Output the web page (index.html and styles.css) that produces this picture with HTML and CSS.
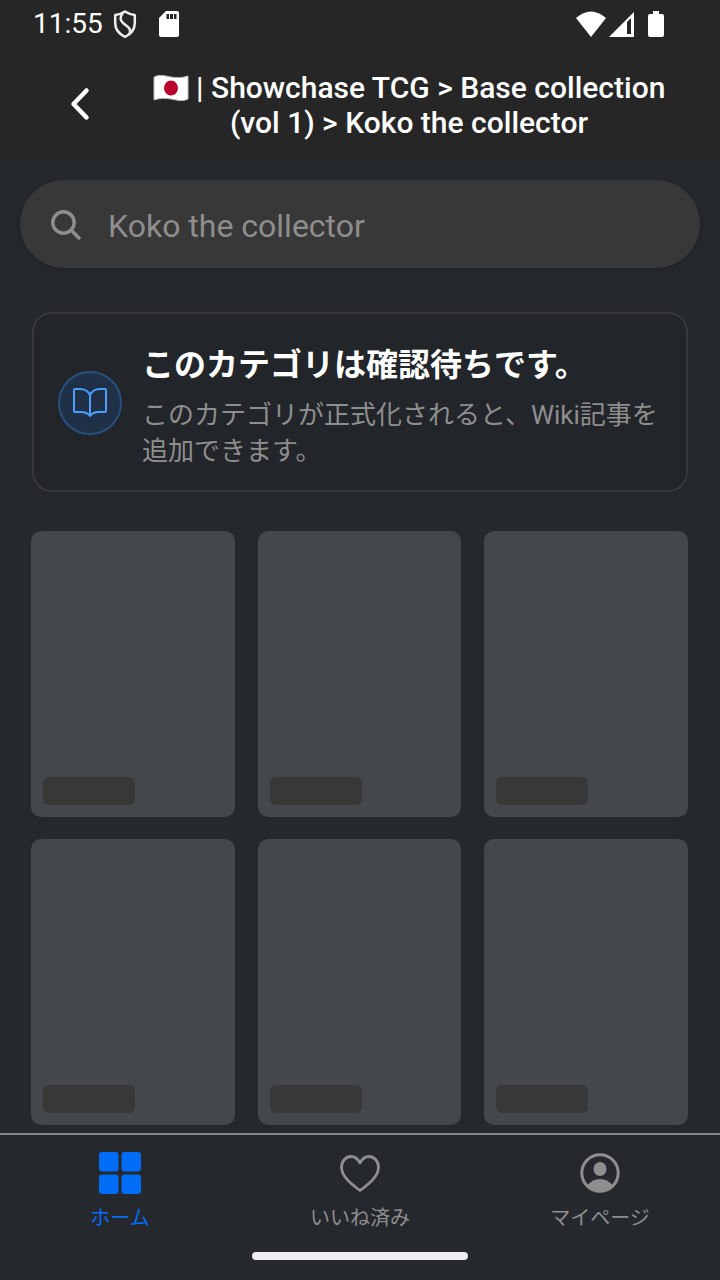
FILE: index.html
```html
<!DOCTYPE html>
<html lang="ja">
<head>
	<meta charset="UTF-8">
	<meta name="viewport" content="width=device-width, initial-scale=1">
	<title>Koko the collector</title>
	<link rel="stylesheet" href="styles.css">
</head>
<body>
	<header class="header">
		<div class="status">
			<span class="time">11:55</span>
			<svg class="shield" width="24" height="30" viewBox="0 0 24 30" fill="none" stroke="#eee" stroke-width="2.500" stroke-linejoin="round">
				<path d="M12 2.500C9 4.500 6 5.500 2.200 6V14C2.200 20 6 25 12 28C18 25 21.800 20 21.800 14V6C18 5.500 15 4.500 12 2.500Z"/>
				<path d="M10 4C6.500 8 7 11.500 10 14L15 18C18 20.500 17.500 23 16 25.500"/>
			</svg>
			<svg width="20" height="26" viewBox="0 0 20 26">
				<path fill="#fff" d="M7 0H18Q20 0 20 2V24Q20 26 18 26H2Q0 26 0 24V7Z"/>
				<path fill="#262626" d="M7.500 3H10V8H7.500ZM11 3H14V8H11ZM15 3H17.500V8H15Z"/>
			</svg>
			<div class="signals">
				<svg width="30" height="26" viewBox="0 0 30 26"><path fill="#fff" d="M0 7Q15-6 30 7L15 26Z"/></svg>
				<svg class="cell" width="25" height="25" viewBox="0 0 25 25">
					<path fill="#fff" d="M25 0V25H0Z"/>
					<path fill="#262626" d="M22 6V22H18V10Z"/>
				</svg>
				<svg width="16" height="26" viewBox="0 0 16 26"><path fill="#fff" d="M5 0H11V3H14Q16 3 16 5V24Q16 26 14 26H2Q0 26 0 24V5Q0 3 2 3H5Z"/></svg>
			</div>
		</div>
		<div class="titlebar">
			<button class="back" type="button" aria-label="戻る">
				<svg width="20" height="34" viewBox="0 0 20 34" fill="none" stroke="#fff" stroke-width="4.500" stroke-linecap="round" stroke-linejoin="round"><path d="M16.500 3.500L3.500 17L16.500 30.500"/></svg>
			</button>
			<h1 class="title">
				<svg class="flag" width="36" height="26" viewBox="0 0 36 26">
					<path fill="#fff" stroke="#bbb" stroke-width="1" d="M1 2C7-1 12 1 18 2C24 3 29 3 35 1V24C29 27 24 25 18 24C12 23 7 23 1 25Z"/>
					<ellipse cx="18" cy="13" rx="7" ry="7.500" fill="#bc002d"/>
				</svg> | Showchase TCG &gt; Base collection (vol 1) &gt; Koko the collector
			</h1>
		</div>
	</header>

	<main class="main">
		<label class="search">
			<svg width="32" height="32" viewBox="0 0 32 32" fill="none" stroke="#8e8e8e" stroke-width="3.500" stroke-linecap="round"><circle cx="13.500" cy="14.500" r="10.700"/><path d="M21.500 22.500L29 30"/></svg>
			<input class="search-input" type="text" placeholder="Koko the collector" aria-label="検索">
		</label>

		<section class="notice">
			<div class="notice-icon">
				<svg width="36" height="32" viewBox="0 0 36 32" fill="none" stroke="#4a9eff" stroke-width="2" stroke-linecap="round" stroke-linejoin="round">
					<path d="M18 8C16 4 12 2 8 2H3Q2 2 2 3V24Q2 25 3 25H9C13 25 16 26 18 29C20 26 23 25 27 25H33Q34 25 34 24V3Q34 2 33 2H28C24 2 20 4 18 8ZM18 8V29"/>
				</svg>
			</div>
			<div class="notice-text">
				<h2 class="notice-title">このカテゴリは確認待ちです。</h2>
				<p class="notice-desc">このカテゴリが正式化されると、Wiki記事を追加できます。</p>
			</div>
		</section>

		<div class="cards">
			<div class="card"><div class="bar"></div></div>
			<div class="card"><div class="bar"></div></div>
			<div class="card"><div class="bar"></div></div>
			<div class="card"><div class="bar"></div></div>
			<div class="card"><div class="bar"></div></div>
			<div class="card"><div class="bar"></div></div>
		</div>
	</main>

	<footer class="footer">
		<nav class="tabs">
			<a class="tab active" href="#">
				<svg width="44" height="44" viewBox="0 0 44 44" fill="currentColor"><rect x="1" y="1" width="19.500" height="19.500" rx="3"/><rect x="23.500" y="1" width="19.500" height="19.500" rx="3"/><rect x="1" y="23.500" width="19.500" height="19.500" rx="3"/><rect x="23.500" y="23.500" width="19.500" height="19.500" rx="3"/></svg>
				<span>ホーム</span>
			</a>
			<a class="tab" href="#">
				<svg width="44" height="44" viewBox="0 0 44 44" fill="none" stroke="currentColor" stroke-width="2.800" stroke-linejoin="round"><path d="M22 39.500C12 32 3.500 25 3.500 16C3.500 10 8 5.500 13 5.500C17 5.500 20 8 22 12C24 8 27 5.500 31 5.500C36 5.500 40.500 10 40.500 16C40.500 25 32 32 22 39.500Z"/></svg>
				<span>いいね済み</span>
			</a>
			<a class="tab" href="#">
				<svg width="44" height="44" viewBox="0 0 44 44" fill="currentColor"><circle cx="22" cy="22" r="18.200" fill="none" stroke="currentColor" stroke-width="3"/><ellipse cx="22" cy="18" rx="6.500" ry="7"/><path d="M9.500 34C13 30 17 28 22 28S31 30 34.500 34C31 38 27 40 22 40S13 38 9.500 34Z"/></svg>
				<span>マイページ</span>
			</a>
		</nav>
		<div class="home-bar"></div>
	</footer>
</body>
</html>
```
FILE: styles.css
```css
*{
	box-sizing: border-box;
}
body,h1,h2,p{
	margin: 0;
}
body{
	display: flex;
	flex-direction: column;
	min-height: 100vh;
	background: #25282d;
	color: #fff;
	font-family: Roboto, "Noto Sans CJK JP", sans-serif;
}
svg{
	display: block;
	flex: none;
}
.header{
	background: #262626;
}
.status{
	display: flex;
	align-items: center;
	height: 48px;
	padding: 0 56px 0 33px;
}
.time{
	font-size: 28px;
	line-height: 32px;
}
.shield{
	margin: 0 22px 0 10px;
}
.signals{
	display: flex;
	align-items: center;
	margin-left: auto;
}
.cell{
	margin: 0 14px 0 3px;
}
.titlebar{
	display: flex;
	height: 112px;
	padding: 22px 46px 0 48px;
}
.back{
	flex: none;
	width: 64px;
	height: 68px;
	padding: 0 22px;
	border: 0;
	background: none;
}
.title{
	flex: 1;
	margin-left: 32px;
	font-size: 30px;
	font-weight: 500;
	line-height: 35px;
	text-align: center;
}
.flag{
	display: inline-block;
	vertical-align: -3px;
}
.main{
	flex: 1;
	padding: 20px 20px 8px;
}
.search{
	display: flex;
	align-items: center;
	gap: 26px;
	height: 88px;
	padding: 0 30px;
	border-radius: 44px;
	background: #383838;
	box-shadow: 0 1px 4px rgba(0,0,0,0.2);
}
.search-input{
	flex: 1;
	min-width: 0;
	padding: 4px 0 0;
	border: 0;
	outline: 0;
	background: none;
	color: #fff;
	font-family: inherit;
	font-size: 32px;
	line-height: 40px;
}
.search-input::placeholder{
	color: #8e8e8e;
}
.notice{
	display: flex;
	align-items: center;
	gap: 20px;
	margin: 44px 12px 0;
	padding: 22px 24px 21px;
	border: 2px solid #383838;
	border-radius: 20px;
	background: #222529;
}
.notice-icon{
	display: flex;
	flex: none;
	align-items: center;
	justify-content: center;
	width: 64px;
	height: 64px;
	border: 2px solid #28507f;
	border-radius: 50%;
	background: #1f3047;
}
.notice-title{
	margin-bottom: 3px;
	font-size: 32px;
	font-weight: 700;
	line-height: 58px;
}
.notice-desc{
	color: #8e8e8e;
	font-size: 26px;
	line-height: 36px;
}
.cards{
	display: grid;
	grid-template-columns: repeat(3, 1fr);
	gap: 22px 23px;
	margin: 39px 12px 0 11px;
}
.card{
	display: flex;
	align-items: flex-end;
	aspect-ratio: 57 / 80;
	padding: 12px;
	border-radius: 10px;
	background: #44474b;
}
.bar{
	width: 92px;
	height: 28px;
	border-radius: 6px;
	background: #383838;
}
.footer{
	padding-bottom: 20px;
	border-top: 2px solid #85878a;
}
.tabs{
	display: flex;
	padding: 16px 0 19px;
}
.tab{
	display: flex;
	flex: 1;
	flex-direction: column;
	align-items: center;
	gap: 9px;
	color: #8e8e8e;
	font-size: 20px;
	line-height: 29px;
	text-decoration: none;
}
.active{
	color: #006df7;
}
.home-bar{
	width: 30%;
	height: 8px;
	margin: 0 auto;
	border-radius: 4px;
	background: #eee;
}
```
